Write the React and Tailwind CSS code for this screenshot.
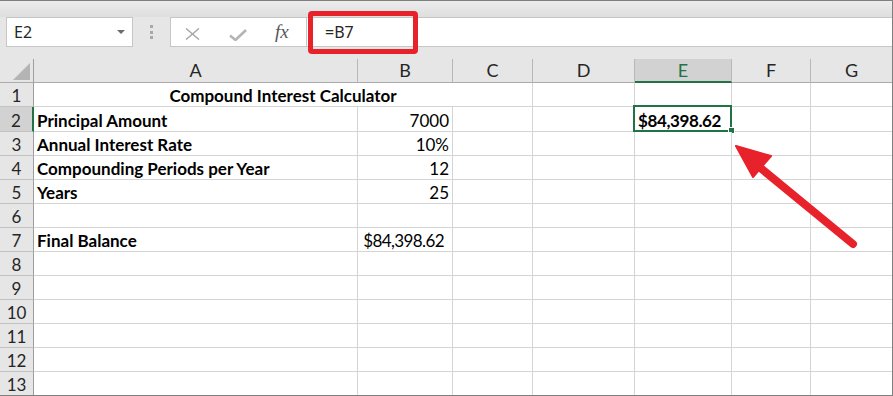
import React from "react";

const GRID = "grid grid-cols-[34px_324px_95px_80px_102px_97px_79px_81px]";
const LETTERS = ["A", "B", "C", "D", "E", "F", "G"];

const data = {
  2: { a: "Principal Amount", b: "7000" },
  3: { a: "Annual Interest Rate", b: "10%" },
  4: { a: "Compounding Periods per Year", b: "12" },
  5: { a: "Years", b: "25" },
  7: { a: "Final Balance", b: "$84,398.62", bPad: true },
};

function rowHeight(r) {
  if (r === 2) return "h-[25px]";
  if (r === 13) return "h-[23px]";
  return "h-[24px]";
}

function Row({ r }) {
  const last = r === 13;
  const bb = last ? "" : "border-b";
  const h = rowHeight(r);
  const cell = `${h} ${bb} border-r border-[#d4d4d4] bg-white flex items-end leading-[21px] text-[17px] text-black`;
  const d = data[r];
  const hdrSel = r === 2;
  return (
    <div className={GRID}>
      <div
        className={`${h} ${last ? "" : "border-b border-b-[#c2c2c2]"} ${
          hdrSel ? "bg-[#d2d2d2] border-r-2 border-r-[#217346]" : "bg-[#e6e6e6] border-r border-r-[#9e9e9e]"
        } flex items-end justify-center leading-[21px] text-[17px] text-[#262626]`}
      >
        {r}
      </div>
      {r === 1 ? (
        <div className={`col-span-3 ${cell} justify-center font-bold`}>Compound Interest Calculator</div>
      ) : (
        <>
          <div className={`${cell} pl-[3px] font-bold`}>{d ? d.a : ""}</div>
          <div className={`${cell} justify-end ${d && d.bPad ? "pr-[8px] tracking-[-0.6px]" : "pr-[3px]"}`}>{d ? d.b : ""}</div>
          <div className={cell} />
        </>
      )}
      <div className={cell} />
      <div className={`${cell} relative justify-end pr-[10px] ${r === 2 ? "font-bold tracking-[-0.4px]" : ""}`}>
        {r === 2 && (
          <>
            $84,398.62
            <div className="absolute left-[-2px] top-[-2px] right-[-1px] bottom-[-1px] border-2 border-[#217346]" />
            <div className="absolute right-[-4px] bottom-[-3px] w-[7px] h-[7px] bg-[#217346] border border-white" />
          </>
        )}
      </div>
      <div className={cell} />
      <div className={`${h} ${bb} border-[#d4d4d4] bg-white`} />
    </div>
  );
}

export default function App() {
  return (
    <div className="relative w-[893px] h-[396px] overflow-hidden border-t border-r border-b border-[#7f7f7f] bg-[#e6e6e6] font-['Lato',sans-serif]">
      {/* top strip */}
      <div className="h-[16px] bg-gradient-to-b from-[#ececec] to-[#dedede]" />

      {/* formula bar */}
      <div className="flex h-[30px]">
        <div className="w-[6px]" />
        <div className="w-[127px] h-full border border-[#c6c6c6] bg-white flex items-center justify-between pl-[7px] pr-[7px] font-['Noto_Sans',sans-serif] text-[16px] leading-[20px] text-[#262626]">
          <span>E2</span>
          <svg width="8" height="4" viewBox="0 0 8 4">
            <polygon points="0,0 8,0 4,4" fill="#6b6b6b" />
          </svg>
        </div>
        <div className="w-[17px]" />
        <div className="w-[3px] flex flex-col items-center justify-center gap-[2.5px]">
          <div className="w-[3px] h-[3px] bg-[#a8a8a8]" />
          <div className="w-[3px] h-[3px] bg-[#a8a8a8]" />
          <div className="w-[3px] h-[3px] bg-[#a8a8a8]" />
        </div>
        <div className="w-[17px]" />
        <div className="w-[136px] h-full border-l border-t border-b border-[#c6c6c6] bg-white flex items-center pl-[14px]">
          <svg width="15" height="12" viewBox="0 0 15 12" className="mt-[4px]">
            <path d="M1 0.5 L14 11.5 M14 0.5 L1 11.5" stroke="#a6a6a6" strokeWidth="1.4" fill="none" />
          </svg>
          <svg width="18" height="12" viewBox="0 0 18 12" className="ml-[29px] mt-[5px]">
            <path d="M1 6.5 L6.5 11 L17 1" stroke="#b4b4b4" strokeWidth="2.6" fill="none" />
          </svg>
          <span className="ml-[28px] font-['Liberation_Serif',serif] italic text-[19px] leading-[20px] text-[#555555]">fx</span>
        </div>
        <div className="flex-1 h-full border-l border-t border-b border-[#c6c6c6] bg-white flex items-center pl-[18px] font-['Noto_Sans',sans-serif] text-[16px] leading-[20px] text-[#262626]">
          =B7
        </div>
      </div>

      <div className="h-[12px]" />

      {/* column headers */}
      <div className={GRID}>
        <div className="h-[24px] border-r border-b border-r-[#9e9e9e] border-b-[#ababab] flex items-end justify-end pr-[3px] pb-[2px]">
          <svg width="17" height="17" viewBox="0 0 17 17">
            <polygon points="17,0 17,17 0,17" fill="#b4b4b4" />
          </svg>
        </div>
        {LETTERS.map((l) => {
          const sel = l === "E";
          return (
            <div
              key={l}
              className={`h-[24px] ${l === "G" ? "" : "border-r border-r-[#b8b8b8]"} ${
                sel ? "bg-[#d2d2d2] border-b-2 border-b-[#217346] text-[#217346]" : "border-b border-b-[#ababab] text-[#262626]"
              } flex items-end justify-center text-[18px] leading-[21px] ${sel ? "pb-0" : "pb-[1px]"}`}
            >
              {l}
            </div>
          );
        })}
      </div>

      {[1, 2, 3, 4, 5, 6, 7, 8, 9, 10, 11, 12, 13].map((r) => (
        <Row key={r} r={r} />
      ))}

      {/* red highlight box around formula */}
      <div className="absolute left-[308px] top-[10px] w-[110px] h-[43px] border-[5px] border-[#e8222a] rounded-[4px]" />

      {/* red arrow */}
      <svg className="absolute left-0 top-0" width="893" height="396" viewBox="0 0 893 396">
        <line x1="853" y1="243" x2="758" y2="165" stroke="#e8222a" strokeWidth="8" strokeLinecap="round" />
        <polygon points="736,145 771,155 753,176" fill="#e8222a" stroke="#e8222a" strokeWidth="2" strokeLinejoin="round" />
      </svg>
    </div>
  );
}
